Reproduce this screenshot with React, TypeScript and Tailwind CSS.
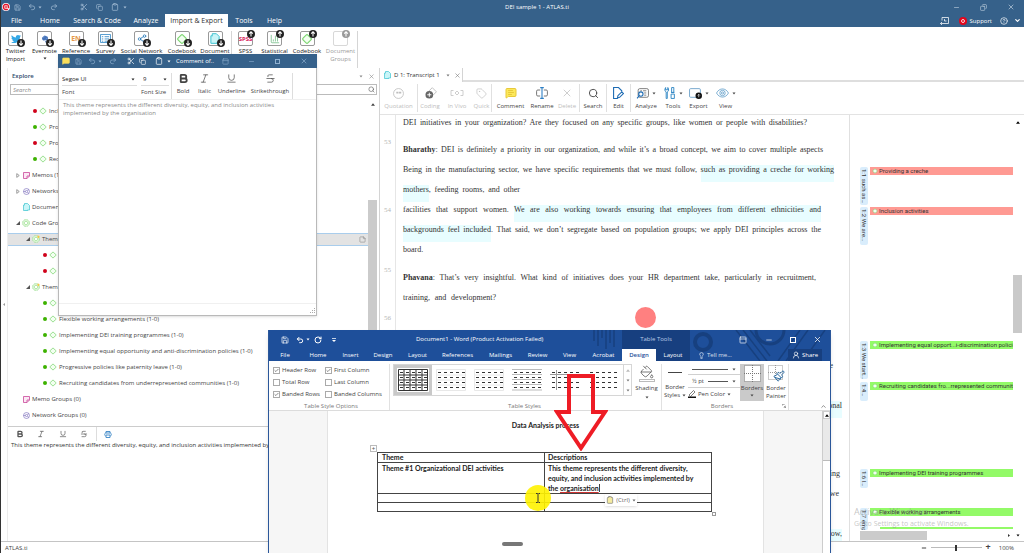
import type { ReactNode } from 'react'
import {
  BarChart3,
  Bold,
  Check,
  ChevronDown,
  ChevronUp,
  CircleHelp,
  Clipboard,
  Copy,
  Italic,
  Lightbulb,
  MessageSquareText,
  Minus,
  PaintBucket,
  Paintbrush,
  PanelTop,
  Redo2,
  RotateCw,
  Save,
  Scissors,
  Search,
  Share2,
  StickyNote,
  Strikethrough,
  Tag,
  Underline,
  Undo2,
  UserRound,
  X,
} from 'lucide-react'
import { FaTwitter, FaEvernote } from 'react-icons/fa'

const Caret = ({ className = '' }: { className?: string }) => (
  <svg viewBox="0 0 8 6" className={`h-[3px] w-1 shrink-0 fill-current ${className}`}>
    <path d="M1 1h6L4 5z" />
  </svg>
)

const CaretUp = ({ className = '' }: { className?: string }) => (
  <svg viewBox="0 0 6 4" className={`h-[3px] w-1 shrink-0 fill-current ${className}`}>
    <path d="M0 4h6L3 0z" />
  </svg>
)

const Diamond = ({ className = '' }: { className?: string }) => (
  <svg viewBox="0 0 14 14" className={`shrink-0 ${className}`}>
    <rect x="3" y="3" width="8" height="8" rx="1.5" transform="rotate(45 7 7)" fill="#f2fff0" stroke="#7ed672" strokeWidth="1.4" />
  </svg>
)

const CodeGroupIcon = ({ star = false }: { star?: boolean }) => (
  <svg viewBox="0 0 16 16" className="size-2 shrink-0">
    <circle cx="8" cy="8" r="7" fill="#dff7da" stroke="#8fd884" strokeDasharray="4 1.5" strokeWidth="1.2" />
    <rect x="5" y="5" width="6" height="6" rx="1" transform="rotate(45 8 8)" fill="#fff" stroke="#7ed672" strokeWidth="1.2" />
    {star && <path d="M12 0l1.500 2.500 2.500.5-2 1.500-1 2.500-1.500-2-2.500-1 2.500-1z" fill="#f7c63c" />}
  </svg>
)

const MemoIcon = () => (
  <svg viewBox="0 0 14 14" className="size-[7px] shrink-0" fill="#fbe8f4" stroke="#c9479b" strokeWidth="1.6">
    <path d="M1 1h12v7l-5 5H1zM13 8H8v5" />
  </svg>
)

const NetworkIcon = () => (
  <svg viewBox="0 0 14 14" className="size-[7px] shrink-0" fill="none" stroke="#7d6fbd" strokeWidth="1.3">
    <circle cx="7" cy="7" r="6" />
    <circle cx="7" cy="7" r="2.2" />
    <path d="M1 7h4M9 5l3-2M9 9l3 2" />
  </svg>
)

const DocIcon = ({ className = 'h-2 w-[7px]' }: { className?: string }) => (
  <svg viewBox="0 0 14 16" className={`shrink-0 ${className}`} fill="#c9f5f8" stroke="#3cc3d0" strokeWidth="1.4">
    <path d="M3 1h6l4 4v9H3z" />
    <path d="M3 4H1v11h9" />
  </svg>
)

/* ---------- main ribbon ---------- */

const ribbonTabs = [
  { label: 'File', width: 'w-[33px]' },
  { label: 'Home', width: 'w-[34px]' },
  { label: 'Search & Code', width: 'w-[60px]' },
  { label: 'Analyze', width: 'w-[38px]' },
  { label: 'Import & Export', width: 'w-[63px]', active: true },
  { label: 'Tools', width: 'w-8' },
  { label: 'Help', width: 'w-[29px]' },
]

type RibbonItem = { lines: string[]; width: string; up?: boolean; off?: boolean; sep?: boolean; menu?: boolean; icon: ReactNode }

const SurveyGlyph = () => (
  <svg viewBox="0 0 12 10" className="h-[9px] w-[11px]" fill="none" stroke="#3d8fc9" strokeWidth="1">
    <path d="M.5.5h11v9H.5zM2 3h1.500M5 3h5M2 5.500h1.500M5 5.500h5M2 8h1.500M5 8h3" />
  </svg>
)

const ribbonItems: RibbonItem[] = [
  { lines: ['Twitter', 'Import'], width: 'w-[29px]', icon: <FaTwitter className="size-2.5 text-[#35a8e6]" /> },
  { lines: ['Evernote'], width: 'w-[29px]', menu: true, icon: <FaEvernote className="size-2 text-[#4674ba]" /> },
  { lines: ['Reference'], width: 'w-[34px]', icon: <span className="text-[7px] font-bold text-[#e59a4a]">EN</span> },
  { lines: ['Survey'], width: 'w-[25px]', icon: <SurveyGlyph /> },
  { lines: ['Social Network'], width: 'w-[47px]', icon: <Share2 className="size-2.5 text-[#2f7dbb]" /> },
  { lines: ['Codebook'], width: 'w-[34px]', icon: <Diamond className="size-3" /> },
  { lines: ['Document'], width: 'w-[33px]', sep: true, icon: <DocIcon className="h-[11px] w-2.5" /> },
  { lines: ['SPSS'], width: 'w-[27px]', up: true, icon: <span className="text-[6px] font-bold text-[#d6205a]">SPSS</span> },
  { lines: ['Statistical'], width: 'w-[31px]', up: true, icon: <BarChart3 className="size-2.5 text-[#78bf8b]" /> },
  { lines: ['Codebook'], width: 'w-[34px]', up: true, icon: <Diamond className="size-3" /> },
  { lines: ['Document', 'Groups'], width: 'w-[34px]', up: true, off: true, sep: true, icon: null },
]

const TransferBadge = ({ up }: { up?: boolean }) => (
  <svg
    viewBox="0 0 10 10"
    className={up ? 'absolute -top-0.5 -right-[3px] size-2' : 'absolute -right-[3px] -bottom-0.5 size-2'}
  >
    <circle cx="5" cy="5" r="5" fill="currentColor" />
    <path d={up ? 'M5 8V2.500M2.700 4.500L5 2.200l2.300 2.300' : 'M5 2v5.500M2.700 5.500L5 7.800l2.300-2.300'} fill="none" stroke="#fff" strokeWidth="1.3" />
  </svg>
)

function QuickAccess() {
  return (
    <div className="flex items-center text-[#a9c1d9]">
      <svg viewBox="0 0 18 18" className="ml-0.5 size-2">
        <circle cx="9" cy="9" r="9" fill="#fff" />
        <path d="M9 3a6 6 0 1 0 4 10.500M9 3a6 6 0 0 1 6 6v3" fill="none" stroke="#e2132a" strokeWidth="3" />
        <circle cx="9" cy="9" r="2.500" fill="none" stroke="#e2132a" strokeWidth="2" />
      </svg>
      <Save className="ml-1 size-[7px]" />
      <Undo2 className="ml-[7px] size-2" />
      <Caret className="ml-0.5" />
      <Redo2 className="ml-2 size-2" />
      <Scissors className="ml-[22px] size-2" />
      <Copy className="ml-2 size-[7px]" />
      <Clipboard className="ml-2 size-2" />
      <Caret className="ml-1" />
    </div>
  )
}

function AppHeader() {
  return (
    <header className="shrink-0 bg-[#36618a] text-white">
      <div className="grid h-[14px] grid-cols-[1fr_auto_1fr] items-center">
        <QuickAccess />
        <h1 className="pl-[50px] text-[6px] leading-[8px]">DEI sample 1 - ATLAS.ti</h1>
        <div className="flex items-center justify-end gap-5 pr-[9px] text-[#c6d5e3]">
          <button aria-label="Minimize"><Minus className="size-[7px]" /></button>
          <button aria-label="Restore"><Copy className="size-[7px] -scale-x-100" /></button>
          <button aria-label="Close"><X className="size-2" /></button>
        </div>
      </div>
      <div className="flex h-[13px] items-stretch">
        <nav className="flex text-[7px] leading-[13px]">
          {ribbonTabs.map((t) => (
            <button
              key={t.label}
              className={`${t.width} whitespace-nowrap text-center ${t.active ? 'bg-white text-[#333]' : ''}`}
            >
              {t.label}
            </button>
          ))}
        </nav>
        <div className="ml-auto flex items-center pr-[3px] text-[6px] leading-[8px]">
          <svg viewBox="0 0 18 16" className="h-2 w-[9px]" fill="none" stroke="#fff" strokeWidth="1.500">
            <path d="M4 1h13v12H1M9 4v4h4M4 10l-3 3 3 3M4 1v6" />
          </svg>
          <button className="ml-[10px] flex items-center gap-0.5">
            <span className="flex size-2 items-center justify-center rounded-full bg-[#e2061c]">
              <span className="size-1 rounded-full border border-white/80" />
            </span>
            Support
          </button>
          <button aria-label="Help" className="ml-2"><CircleHelp className="size-2" /></button>
          <button aria-label="Collapse ribbon" className="ml-1.5"><ChevronDown strokeWidth={4} className="size-[7px]" /></button>
        </div>
      </div>
    </header>
  )
}

function Ribbon() {
  return (
    <div className="flex h-[41px] shrink-0 pt-1 pl-px">
      {ribbonItems.map((item, i) => (
        <button
          key={i}
          className={`flex flex-col items-center pb-0.5 text-[6px] leading-[8px] ${item.width} ${item.off ? 'text-[#9a9a9a]' : 'text-[#222]'} ${item.sep ? 'border-r border-[#d5d5d5]' : ''}`}
        >
          <span className={`relative mb-px flex size-[15px] shrink-0 items-center justify-center rounded-xs border ${item.off ? 'border-[#d8d8d8]' : 'border-[#999]'}`}>
            {item.icon}
            <TransferBadge up={item.up} />
          </span>
          {item.lines.map((l) => (
            <span key={l} className="whitespace-nowrap">{l}</span>
          ))}
          {item.menu && <Caret className="mt-0.5" />}
        </button>
      ))}
    </div>
  )
}

/* ---------- explorer ---------- */

type TreeRow = { kind: 'code' | 'memo' | 'network' | 'doc' | 'group' | 'theme'; text: string; level: 0 | 1 | 2; dot?: 'red' | 'green'; open?: boolean; closed?: boolean; selected?: boolean }

const tree: TreeRow[] = [
  { kind: 'code', text: 'Incl', level: 1, dot: 'red' },
  { kind: 'code', text: 'Progressive', level: 1, dot: 'green' },
  { kind: 'code', text: 'Providing', level: 1, dot: 'red' },
  { kind: 'code', text: 'Recruiting', level: 1, dot: 'green' },
  { kind: 'memo', text: 'Memos (1)', level: 0, closed: true },
  { kind: 'network', text: 'Networks (0)', level: 0, closed: true },
  { kind: 'doc', text: 'Document Groups (0)', level: 0 },
  { kind: 'group', text: 'Code Groups (2)', level: 0, open: true },
  { kind: 'theme', text: 'Theme #1', level: 1, open: true, selected: true },
  { kind: 'code', text: 'Inclusion activities (1-0)', level: 2, dot: 'red' },
  { kind: 'code', text: 'Providing a creche (1-0)', level: 2, dot: 'red' },
  { kind: 'theme', text: 'Theme #2', level: 1, open: true },
  { kind: 'code', text: 'Employee support (1-0)', level: 2, dot: 'green' },
  { kind: 'code', text: 'Flexible working arrangements (1-0)', level: 2, dot: 'green' },
  { kind: 'code', text: 'Implementing DEI training programmes (1-0)', level: 2, dot: 'green' },
  { kind: 'code', text: 'Implementing equal opportunity and anti-discrimination policies (1-0)', level: 2, dot: 'green' },
  { kind: 'code', text: 'Progressive policies like paternity leave (1-0)', level: 2, dot: 'green' },
  { kind: 'code', text: 'Recruiting candidates from underrepresented communities (1-0)', level: 2, dot: 'green' },
  { kind: 'memo', text: 'Memo Groups (0)', level: 0 },
  { kind: 'network', text: 'Network Groups (0)', level: 0 },
]

const indent = ['pl-[6px]', 'pl-4', 'pl-[33px]']

function TreeItem({ row }: { row: TreeRow }) {
  const pad = row.kind === 'code' && row.level === 1 ? 'pl-[23px]' : indent[row.level]
  return (
    <li className="flex h-4 items-center">
      <div
        className={`flex h-[13px] w-full items-center border-y ${pad} ${row.selected ? 'border-[#a9cdec] bg-[#e3e3e3]' : 'border-transparent'}`}
      >
        <span className="flex w-2 shrink-0 justify-center">
          {row.dot && <span className={`size-1 rounded-full ${row.dot === 'red' ? 'bg-[#d0021b]' : 'bg-[#3db200]'}`} />}
          {row.closed && <svg viewBox="0 0 6 8" className="h-[5px] w-1"><path d="M1 1l4 3-4 3z" fill="none" stroke="#666" /></svg>}
          {row.open && <svg viewBox="0 0 6 6" className="size-1"><path d="M6 0v6H0z" fill="#555" /></svg>}
        </span>
        <span className="mr-0.5 flex w-2 shrink-0 justify-center">
          {row.kind === 'code' && <Diamond className="size-2" />}
          {row.kind === 'memo' && <MemoIcon />}
          {row.kind === 'network' && <NetworkIcon />}
          {row.kind === 'doc' && <DocIcon />}
          {row.kind === 'group' && <CodeGroupIcon />}
          {row.kind === 'theme' && <CodeGroupIcon star />}
        </span>
        <span className="whitespace-nowrap">{row.text}</span>
        {row.selected && <StickyNote className="mr-0.5 ml-auto size-[7px] text-[#888]" />}
      </div>
    </li>
  )
}

function Explorer() {
  return (
    <aside className="flex w-[380px] shrink-0 border-r border-[#d4d4d4]">
      <div className="flex w-2 items-center justify-center border-r border-[#ececec]">
        <Caret className="rotate-90 text-[#999]" />
      </div>
      <div className="flex min-w-0 flex-1 flex-col text-[6px] leading-[8px] text-[#444]">
        <div className="flex h-4 items-center px-1">
          <h2 className="font-semibold text-[#2c4a6b]">Explore</h2>
          <Caret className="mr-[5px] ml-auto text-[#888]" />
          <X className="size-[7px] text-[#888]" />
        </div>
        <label className="mx-0.5 flex h-[11px] items-center border border-[#bbb] pr-px pl-0.5">
          <input aria-label="Search" placeholder="Search" className="min-w-0 flex-1 italic outline-none placeholder:text-[#888]" />
          <Search className="size-[7px] text-[#555]" />
        </label>
        <div className="mt-2 flex h-[323px]">
          <ul className="min-w-0 flex-1">
            {tree.map((row, i) => (
              <TreeItem key={i} row={row} />
            ))}
          </ul>
          <div className="flex w-[9px] flex-col items-center">
            <CaretUp />
            <div className="mt-[94px] w-full flex-1 bg-[#cbcbcb]" />
          </div>
          <div className="w-0.5" />
        </div>
        <div className="flex h-[15px] shrink-0 items-center border-t border-[#ccc] pl-2 text-[#555]">
          <button aria-label="Bold"><Bold strokeWidth={4} className="size-2" /></button>
          <button aria-label="Italic" className="ml-[13px]"><Italic className="size-2" /></button>
          <button aria-label="Underline" className="ml-[14px]"><Underline className="size-2" /></button>
          <button aria-label="Strikethrough" className="ml-[13px]"><Strikethrough className="size-2" /></button>
          <span className="ml-2 h-full border-l border-[#ddd]" />
          <svg viewBox="0 0 16 14" className="ml-[7px] h-[7px] w-2" fill="none" stroke="#3a86c6" strokeWidth="1.8">
            <path d="M4 4V1h8v3M3 10c-2 0-2-6 0-6h10c2 0 2 6 0 6M4 8h8v5H4z" />
          </svg>
        </div>
        <p className="flex-1 pl-[3px] whitespace-nowrap text-[#333]">
          This theme represents the different diversity, equity, and inclusion activities implemented by
        </p>
      </div>
    </aside>
  )
}

/* ---------- document ---------- */

type Tool = { label: string; width: string; off?: boolean; sep?: boolean; menu?: boolean; icon: ReactNode }

const tools: Tool[] = [
  {
    label: 'Quotation', width: 'w-[38px]', off: true, sep: true,
    icon: <svg viewBox="0 0 20 20" className="size-[11px]" fill="none" stroke="currentColor" strokeWidth="1.5"><circle cx="10" cy="10" r="9" /><path d="M7 7v3M9 7v3M12 7v3M14 7v3" strokeWidth="2" /></svg>,
  },
  {
    label: 'Coding', width: 'w-6', off: true,
    icon: <svg viewBox="0 0 22 20" className="h-3 w-[13px]"><path d="M8 7l6-6 7 7-6 6" fill="none" stroke="#bbb" strokeWidth="1.5" /><circle cx="9" cy="13" r="6.500" fill="#666" /><path d="M9 9.500v7M5.500 13h7" stroke="#fff" strokeWidth="1.6" /></svg>,
  },
  {
    label: 'In Vivo', width: 'w-[30px]', off: true,
    icon: <svg viewBox="0 0 26 12" className="h-1.5 w-[14px]" fill="none" stroke="currentColor" strokeWidth="1.5"><path d="M6 1H1v10h5M20 1h5v10h-5M13 2l4 4-4 4-4-4z" /></svg>,
  },
  { label: 'Quick', width: 'w-[20px]', off: true, sep: true, icon: <Tag strokeWidth={1.5} className="size-[11px]" /> },
  { label: 'Comment', width: 'w-[37px]', icon: <MessageSquareText className="size-3 fill-[#fce85a] text-[#e8c93a]" /> },
  {
    label: 'Rename', width: 'w-[26px]',
    icon: <svg viewBox="0 0 20 20" className="size-3" fill="none" strokeWidth="1.5"><path d="M7 5H3a2 2 0 0 0-2 2v6a2 2 0 0 0 2 2h4M13 5h4a2 2 0 0 1 2 2v6a2 2 0 0 1-2 2h-4" stroke="#666" /><path d="M10 1v18M7 1h6M7 19h6" stroke="#2d7fc4" strokeWidth="1.800" /></svg>,
  },
  { label: 'Delete', width: 'w-[25px]', off: true, sep: true, icon: <X strokeWidth={1.5} className="size-3" /> },
  { label: 'Search', width: 'w-[27px]', sep: true, icon: <Search className="size-[11px]" /> },
  {
    label: 'Edit', width: 'w-6', sep: true,
    icon: <svg viewBox="0 0 20 22" className="h-3 w-[11px]" fill="none" stroke="#1d6bb3" strokeWidth="2"><path d="M9 21H1V1h9l6 6v3M9 16l7-7 3 3-7 7-4 1z" /></svg>,
  },
  {
    label: 'Analyze', width: 'w-[30px]', menu: true,
    icon: <svg viewBox="0 0 24 20" className="h-[11px] w-[13px]" fill="none" stroke="#666" strokeWidth="1.500"><rect x="4" y="1" width="19" height="16" rx="3" /><path d="M8 5h3M13 5h6M15 9h4M15 13h4" /><circle cx="9" cy="11" r="4" stroke="#1d6bb3" strokeWidth="2" /><path d="M6 14l-4 5" stroke="#1d6bb3" strokeWidth="2" /></svg>,
  },
  {
    label: 'Tools', width: 'w-6', menu: true,
    icon: <svg viewBox="0 0 22 22" className="size-3" fill="none" stroke="#2d86c4" strokeWidth="1.700"><path d="M4 21V9C1 8 1 4 3 1v4h4V1c2 3 2 7-1 8v12zM14 1h4v9h-4zM13 13h6v8h-6zM13 10h6" /></svg>,
  },
  {
    label: 'Export', width: 'w-[27px]', menu: true,
    icon: <svg viewBox="0 0 24 20" className="h-[11px] w-[13px]"><rect x="1" y="1" width="20" height="16" rx="2" fill="none" stroke="#5e98c4" strokeWidth="1.500" /><circle cx="18" cy="14" r="6" fill="#111" /><path d="M18 17v-5M16 13.500l2-2 2 2" fill="none" stroke="#fff" strokeWidth="1.300" /></svg>,
  },
  {
    label: 'View', width: 'w-[27px]', menu: true,
    icon: <svg viewBox="0 0 24 18" className="h-[10px] w-[13px]" fill="none" stroke="#4a90c2" strokeWidth="1.300"><path d="M1 9C6-1 18-1 23 9 18 19 6 19 1 9z" /><circle cx="12" cy="9" r="5" /><circle cx="12" cy="9" r="2" /></svg>,
  },
]

function DocToolbar() {
  return (
    <div className="flex h-[33px] shrink-0 border-b border-[#e3e3e3] py-0.5 text-[6px] leading-[8px] text-[#444]">
      {tools.map((t) => (
        <button
          key={t.label}
          className={`flex shrink-0 flex-col items-center ${t.width} ${t.off ? 'text-[#bdbdbd]' : ''} ${t.sep ? 'border-r border-[#e0e0e0]' : ''}`}
        >
          <span className="flex h-[18px] items-center gap-[3px]">
            {t.icon}
            {t.menu && <Caret />}
          </span>
          <span className="whitespace-nowrap">{t.label}</span>
        </button>
      ))}
    </div>
  )
}

const Line = ({ width = 'w-[420px]', justify = true, children }: { width?: string; justify?: boolean; children: ReactNode }) => (
  <span className={`block h-5 whitespace-nowrap ${width} ${justify ? '[text-align-last:justify]' : ''}`}>{children}</span>
)

const Quote = ({ children }: { children: ReactNode }) => <mark className="bg-[#e8fdff] pb-2 text-inherit">{children}</mark>

function Paragraph({ no, low = false, children }: { no?: string; low?: boolean; children: ReactNode }) {
  return (
    <div className="flex">
      <span className={`w-4 shrink-0 border-r border-[#e6e6e6] text-center font-['Liberation_Serif',serif] text-[7px] text-[#b5b5b5] ${low ? 'leading-5' : 'pt-2 leading-[5px]'}`}>
        {no}
      </span>
      <p className={`pl-[7px] ${low ? '' : 'pt-2'}`}>{children}</p>
    </div>
  )
}

function Transcript() {
  return (
    <article className="min-w-0 flex-1 overflow-hidden font-['Liberation_Serif',serif] text-[8px] leading-5 text-[#333]">
      <div className="flex h-[17px] leading-4">
        <span className="w-4 shrink-0 border-r border-[#e6e6e6]" />
        <p className="w-[411px] pl-[7px] whitespace-nowrap [text-align-last:justify]">
          DEI initiatives in your organization? Are they focused on any specific groups, like women or people with disabilities?
        </p>
      </div>
      <Paragraph no="53">
        <Line><b>Bharathy</b>: DEI is definitely a priority in our organization, and while it&rsquo;s a broad concept, we aim to cover multiple aspects</Line>
        <Line width="w-[431px]">Being in the manufacturing sector, we have specific requirements that we must follow, <Quote>such as providing a creche for working</Quote></Line>
        <Line width="w-[117px]"><Quote>mothers</Quote>, feeding rooms, and other</Line>
      </Paragraph>
      <Paragraph no="54" low>
        <Line width="w-[418px]">facilities that support women. <Quote>We are also working towards ensuring that employees from different ethnicities and</Quote></Line>
        <Line width="w-[418px]"><Quote>backgrounds feel included</Quote>. That said, we don&rsquo;t segregate based on population groups; we apply DEI principles across the</Line>
        <Line justify={false}>board.</Line>
      </Paragraph>
      <Paragraph no="55">
        <Line width="w-[413px]"><b>Phavana</b>: That&rsquo;s very insightful. What kind of initiatives does your HR department take, particularly in recruitment,</Line>
        <Line width="w-[93px]">training, and development?</Line>
      </Paragraph>
      <Paragraph no="56">
        <span className="block w-[439px] text-right">
          <span className="block h-10" />
          <span className="block h-5 pr-[9px]">the</span>
          <span className="block h-5" />
          <span className="block h-5"><Quote>national</Quote></span>
        </span>
      </Paragraph>
      <Paragraph no="57">
        <span className="block w-[439px] text-right">
          <span className="block h-10" />
          <span className="block h-5 pr-0.5">ing</span>
          <span className="block h-5 pr-[3px]">we</span>
          <span className="block h-5" />
          <span className="block h-5"><Quote>now,</Quote></span>
        </span>
      </Paragraph>
    </article>
  )
}

const quotations = [
  { id: '1:1 such as…', place: 'mt-[52px] h-[38px]', code: 'Providing a creche', color: 'bg-[#ff9a93]' },
  { id: '1:2 We are…', place: 'mt-[2px] h-[38px]', code: 'Inclusion activities', color: 'bg-[#ff9a93]' },
  { id: '1:3 We start…', place: 'mt-[96px] h-[38px]', code: 'Implementing equal opport...i-discrimination policie', color: 'bg-[#93fa68]' },
  { id: '1:4…', place: 'mt-[3px] h-[19px]', code: 'Recruiting candidates fro...rrepresented communitie', color: 'bg-[#93fa68]' },
  { id: '1:6 I…', place: 'mt-[68px] h-[19px]', code: 'Implementing DEI training programmes', color: 'bg-[#93fa68]' },
  { id: '1:7 emp', place: 'mt-[20px] h-[22px]', code: 'Flexible working arrangements', color: 'bg-[#93fa68]' },
]

function MarginArea() {
  return (
    <div className="relative flex w-[164px] shrink-0 flex-col border-l border-[#e0e0e0] pl-[10px] font-['Roboto',sans-serif] text-[6px] leading-[8px] text-[#333]">
      {quotations.map((q) => (
        <div key={q.id} className={`flex shrink-0 gap-0.5 ${q.place}`}>
          <span className="w-2 overflow-hidden rounded-xs bg-[#d9edfc] pt-0.5 whitespace-nowrap [writing-mode:vertical-rl]">{q.id}</span>
          <span className={`flex h-2 min-w-0 flex-1 items-center gap-px overflow-hidden pl-0.5 whitespace-nowrap ${q.color}`}>
            <Diamond className="size-1.5" />
            {q.code}
          </span>
        </div>
      ))}
      <div className="mt-auto flex h-[11px] shrink-0 items-center">
        <div className="h-[9px] w-[67px] bg-[#cbcbcb]" />
        <Caret className="mr-0.5 ml-auto -rotate-90" />
      </div>
      <div className="absolute bottom-[12px] left-[30px] h-0.5 w-[133px] bg-[#93fa68]" />
      <div className="absolute bottom-3 left-1 font-['Open_Sans',sans-serif] whitespace-nowrap text-[#8a8a8a]/50">
        <p className="text-[9px] leading-[12px]">Activate Windows</p>
        <p className="text-[7px] leading-[11px]">Go to Settings to activate Windows.</p>
      </div>
    </div>
  )
}

function DocumentPane() {
  return (
    <main className="flex min-w-0 flex-1 flex-col">
      <div className="flex h-[14px] shrink-0">
        <button className="flex w-[83px] shrink-0 items-center border-r border-[#d4d4d4] pl-1 text-[6px] leading-[8px] text-[#333]">
          <DocIcon />
          <span className="ml-[3px] whitespace-nowrap">D 1: Transcript 1</span>
          <Caret className="ml-1.5 text-[#777]" />
          <X className="ml-1 size-[7px] text-[#777]" />
        </button>
        <div className="flex-1 border-b-2 border-[#dedede]" />
      </div>
      <DocToolbar />
      <div className="flex min-h-0 flex-1">
        <Transcript />
        <MarginArea />
        <div className="flex w-[11px] flex-col items-center pt-1.5 pr-0.5 pb-1">
          <CaretUp />
          <div className="mt-[151px] h-[58px] w-full bg-[#c9c9c9]" />
          <Caret className="mt-auto" />
        </div>
      </div>
    </main>
  )
}

function StatusBar() {
  return (
    <footer className="flex h-3 shrink-0 items-center border-t border-[#c4c4c4] pr-[10px] pl-[5px] text-[6px] leading-[8px] text-[#444]">
      <span>ATLAS.ti</span>
      <button aria-label="Zoom out" className="ml-auto"><Minus strokeWidth={4} className="size-1.5" /></button>
      <div className="relative mx-1 flex h-2 w-[51px] items-center">
        <span className="h-px w-full bg-[#bbb]" />
        <span className="absolute left-6 h-1.5 w-0.5 bg-[#333]" />
      </div>
      <button aria-label="Zoom in"><span className="text-[9px] font-bold">+</span></button>
      <span className="ml-2">100%</span>
    </footer>
  )
}

/* ---------- comment editor ---------- */

const formats = [
  { label: 'Bold', width: 'w-[22px]', icon: <Bold strokeWidth={4} className="size-[11px]" /> },
  { label: 'Italic', width: 'w-[21px]', icon: <Italic strokeWidth={1.5} className="size-[11px]" /> },
  { label: 'Underline', width: 'w-[33px]', icon: <Underline strokeWidth={1.5} className="size-[11px]" /> },
  { label: 'Strikethrough', width: 'w-[44px]', icon: <Strikethrough strokeWidth={1.5} className="size-[11px]" /> },
]

function CommentWindow() {
  return (
    <section className="absolute top-[54px] left-[58px] flex h-[262px] w-[259px] flex-col border border-[#b9b9b9] bg-white text-[6px] leading-[8px] text-[#444] shadow-sm">
      <div className="-mx-px -mt-px flex h-[14px] shrink-0 items-center bg-[#36618a] pl-1 text-[#8fb0d0]">
        <MessageSquareText className="size-2 fill-[#fbdf5c] text-[#fbdf5c]" />
        <Save className="ml-[5px] size-[7px]" />
        <Undo2 className="ml-1.5 size-2" />
        <Caret className="ml-0.5" />
        <Redo2 className="ml-[7px] size-2" />
        <Scissors className="ml-2.5 size-2 text-white" />
        <Copy className="ml-1 size-[7px] text-white" />
        <Clipboard className="ml-[9px] size-2 text-white" />
        <Caret className="ml-1 text-white" />
        <h2 className="ml-[5px] whitespace-nowrap text-white">Comment of..</h2>
        <PanelTop className="ml-auto size-[7px]" />
        <button aria-label="Minimize" className="ml-[19px]"><Minus className="size-[7px]" /></button>
        <button aria-label="Maximize" className="ml-5 size-[5px] border border-current" />
        <button aria-label="Close" className="mr-[9px] ml-5"><X className="size-2" /></button>
      </div>
      <div className="flex h-8 shrink-0 border-b border-[#efefef] pt-[5px] pl-[3px]">
        <label className="flex w-[75px] flex-col">
          <span className="flex h-[13px] items-center border-b border-[#ddd] pr-0.5 text-[#222]">
            <select defaultValue="Segoe UI" className="w-full appearance-none outline-none">
              <option>Segoe UI</option>
            </select>
            <Caret />
          </span>
          <span className="pt-0.5">Font</span>
        </label>
        <label className="ml-1 flex w-7 flex-col">
          <span className="flex h-[13px] items-center border-b border-[#ddd] pr-0.5 text-[#222]">
            <select defaultValue="9" className="w-full appearance-none pl-0.5 outline-none">
              <option>9</option>
            </select>
            <Caret />
          </span>
          <span className="pt-0.5 whitespace-nowrap">Font Size</span>
        </label>
        <div className="ml-0.5 flex h-[26px] border-x border-[#ddd]">
          {formats.map((f) => (
            <button key={f.label} className={`flex flex-col items-center gap-[3px] ${f.width}`}>
              {f.icon}
              <span>{f.label}</span>
            </button>
          ))}
        </div>
      </div>
      <p className="w-[220px] flex-1 pt-px pl-1 text-[#8a8a8a]">
        This theme represents the different diversity, equity, and inclusion activities implemented by the organisation
      </p>
      <div className="flex h-3 shrink-0 items-end justify-end border-t border-[#f0f0f0] p-px">
        <svg viewBox="0 0 6 6" className="size-1.5 fill-[#aaa]">
          <path d="M5 0h1v1H5zM5 2h1v1H5zM5 4h1v1H5zM3 2h1v1H3zM3 4h1v1H3zM1 4h1v1H1z" />
        </svg>
      </div>
    </section>
  )
}

/* ---------- word ---------- */

const wordTabs = [
  { label: 'File', width: 'w-8' },
  { label: 'Home', width: 'w-[34px]' },
  { label: 'Insert', width: 'w-[31px]' },
  { label: 'Design', width: 'w-[34px]' },
  { label: 'Layout', width: 'w-[35px]' },
  { label: 'References', width: 'w-[45px]' },
  { label: 'Mailings', width: 'w-[41px]' },
  { label: 'Review', width: 'w-[33px]' },
  { label: 'View', width: 'w-[31px]' },
  { label: 'Acrobat', width: 'w-[37px]' },
  { label: 'Design', width: 'w-[34px]', active: true },
  { label: 'Layout', width: 'w-[34px]' },
]

const styleOptions = [
  { label: 'Header Row', on: true },
  { label: 'First Column', on: true },
  { label: 'Total Row', on: false },
  { label: 'Last Column', on: false },
  { label: 'Banded Rows', on: true },
  { label: 'Banded Columns', on: false },
]

const rowYs = [3.5, 8.5, 13.5, 18.5]
const colXs = [2, 8, 14, 20, 26]

function StyleThumb({ variant }: { variant: number }) {
  return (
    <svg viewBox="0 0 30 22" className="h-[22px] w-[30px]">
      {variant === 0 && <path d="M.5.500h29v21H.5zM.5 6h29M.5 11h29M.5 16h29M6 .500v21M12 .500v21M18 .500v21M24 .500v21" fill="none" stroke="#333" />}
      {(variant === 1 || variant === 2) && <path d="M.5.500h29v21H.5zM.5 6h29M.5 11h29M.5 16h29" fill="none" stroke="#e8e8e8" />}
      {variant === 3 && <path d="M0 .500h30M0 5.500h30M0 10.500h30M0 15.500h30M0 21h30" stroke="#bbb" />}
      {variant === 4 && <path d="M6.500 1v20M0 5.500h30" stroke="#999" />}
      {rowYs.map((y) => colXs.map((x) => <path key={`${x}-${y}`} d={`M${x} ${y}h3`} stroke="#333" />))}
    </svg>
  )
}

function WordTitle() {
  return (
    <div className="relative shrink-0 overflow-hidden bg-[#1e4f9a] text-white">
      <svg viewBox="0 0 240 31" className="absolute top-0 right-0 h-[31px] w-[240px]" fill="none" stroke="#17407f">
        <path d="M4 0v11M8 0v16M12 0v8M16 0v19M20 0v13M24 0v17" strokeWidth="1.500" />
        <circle cx="113" cy="12" r="8" strokeWidth="4" />
        <path d="M146 0l24 31M153 0l24 31M160 0l20 26M210 0l-22 31M218 0l-22 31M235 0l-22 31" strokeWidth="1.500" />
        <path d="M166 0a14 14 0 0 0 28 0" strokeWidth="3" />
      </svg>
      <div className="relative flex h-[19px] items-center pl-3 text-[7px]">
        <Save className="size-2" />
        <Undo2 strokeWidth={3} className="ml-[7px] size-2" />
        <Caret className="ml-0.5" />
        <RotateCw strokeWidth={3} className="ml-1 size-2" />
        <svg viewBox="0 0 6 6" className="ml-[10px] size-1 fill-white"><path d="M0 0h6v1H0zM0 3h6L3 6z" /></svg>
        <h2 className="ml-20 text-[6px] whitespace-nowrap">Document1 - Word (Product Activation Failed)</h2>
        <div className="ml-auto flex h-full w-[68px] items-center justify-center bg-[#173f7f] text-[6px] text-[#b9cbe6]">Table Tools</div>
        <div className="flex w-[140px] shrink-0 items-center pr-2">
          <PanelTop className="ml-auto size-2" />
          <button aria-label="Minimize" className="ml-[18px]"><Minus className="size-2" /></button>
          <button aria-label="Maximize" className="ml-[17px] size-1.5 border border-current" />
          <button aria-label="Close" className="ml-[17px]"><X className="size-[9px]" /></button>
        </div>
      </div>
      <div className="relative flex h-3 text-[6px] leading-3">
        {wordTabs.map((t, i) => (
          <button key={i} className={`${t.width} shrink-0 ${t.active ? 'bg-white font-semibold text-[#1e4f9a]' : ''} ${i === 11 ? 'bg-[#173f7f]' : ''}`}>
            {t.label}
          </button>
        ))}
        <label className="ml-2 flex items-center gap-0.5">
          <Lightbulb className="size-[7px]" />
          <input aria-label="Tell me" placeholder="Tell me..." className="w-[50px] outline-none placeholder:text-white/80" />
        </label>
        <button className="mr-2 ml-auto flex w-[34px] items-center justify-center gap-0.5 bg-[#173f7f]">
          <UserRound className="size-2" />
          Share
        </button>
      </div>
    </div>
  )
}

function WordRibbon() {
  return (
    <div className="flex h-[50px] shrink-0 border-b border-[#dcdcdc] bg-white pt-[3px] text-[6px] leading-[8px] text-[#444]">
      <fieldset className="flex w-[121px] shrink-0 flex-col border-r border-[#e1e1e1] pl-1">
        <div className="grid grid-cols-[52px_1fr]">
          {styleOptions.map((o) => (
            <label key={o.label} className="flex h-3 items-center gap-0.5 whitespace-nowrap">
              <span className="relative flex size-[7px] shrink-0">
                <input type="checkbox" defaultChecked={o.on} className="peer size-[7px] appearance-none border border-[#aaa] bg-white" />
                <Check className="pointer-events-none absolute inset-px hidden size-[5px] peer-checked:block" strokeWidth={3} />
              </span>
              {o.label}
            </label>
          ))}
        </div>
        <div className="mt-auto text-center text-[#777]">Table Style Options</div>
      </fieldset>

      <div className="flex min-w-0 flex-1 flex-col pl-[3px]">
        <div className="flex h-8 border border-[#d6d6d6]">
          <div className="flex flex-1 items-center">
            {[0, 1, 2, 3, 4, 5].map((v) => (
              <button key={v} aria-label={`Table style ${v + 1}`} className={`flex h-full w-[38px] items-center justify-center ${v === 0 ? 'border-3 border-[#c9c9c9]' : ''}`}>
                <StyleThumb variant={v} />
              </button>
            ))}
          </div>
          <div className="flex w-2 flex-col items-center justify-around border-l border-[#d6d6d6] text-[#777]">
            <CaretUp className="text-[#bbb]" />
            <Caret />
            <Caret />
          </div>
        </div>
        <div className="mt-auto pl-6 text-center text-[#777]">Table Styles</div>
      </div>

      <button className="flex w-[30px] shrink-0 flex-col items-center border-r border-[#e1e1e1]">
        <PaintBucket strokeWidth={1.2} className="mt-px size-[14px]" />
        <span className="h-[3px] w-4 border border-[#bbb]" />
        <span className="mt-0.5">Shading</span>
        <Caret className="mt-1" />
      </button>

      <div className="flex w-[127px] shrink-0 flex-col border-r border-[#e1e1e1]">
        <div className="flex">
          <button className="flex w-[26px] flex-col items-center">
            <span className="mt-2 mb-[10px] h-px w-[14px] bg-[#444]" />
            <span>Border</span>
            <span className="flex items-center gap-0.5">Styles <Caret /></span>
          </button>
          <div className="flex w-[52px] flex-col">
            <button aria-label="Line style" className="flex h-[11px] items-center justify-between border-b border-[#d0d0d0] px-1">
              <span className="h-px w-9 bg-[#555]" />
              <Caret />
            </button>
            <button className="flex h-[13px] items-center justify-between border-b border-[#d0d0d0] px-1">
              <span>½ pt</span>
              <span className="h-px w-5 bg-[#555]" />
              <Caret />
            </button>
            <button className="flex h-3 items-center gap-0.5 whitespace-nowrap">
              <svg viewBox="0 0 16 16" className="size-2"><path d="M2 10l9-9 3 3-9 9z" fill="none" stroke="#555" strokeWidth="1.500" /><path d="M0 13h16v3H0z" fill="#111" /></svg>
              Pen Color <Caret />
            </button>
          </div>
          <button className="flex h-[37px] w-6 flex-col items-center bg-[#cacaca]">
            <svg viewBox="0 0 17 17" className="mt-px mb-0.5 size-[17px] shrink-0" fill="#fff" stroke="#777" strokeDasharray="1 1">
              <path d="M.5.500h16v16H.5zM8.500 0v17M0 8.500h17" />
            </svg>
            Borders
            <Caret className="mt-0.5" />
          </button>
          <button className="flex flex-1 flex-col items-center">
            <span className="relative mt-px mb-0.5 size-[17px]">
              <svg viewBox="0 0 17 17" className="size-[17px]" fill="none" stroke="#999" strokeDasharray="1 1">
                <path d="M.5.500h14v14H.5zM7.500 0v14M0 7.500h14" />
              </svg>
              <Paintbrush className="absolute right-0 bottom-0 size-3 text-[#2c6aa0]" />
            </span>
            <span>Border</span>
            <span>Painter</span>
          </button>
        </div>
        <div className="mt-auto flex items-center">
          <span className="flex-1 text-center text-[#777]">Borders</span>
          <svg viewBox="0 0 6 6" className="mr-0.5 size-1" fill="none" stroke="#777"><path d="M0 3V.500h4M3 3l2.500 2.500M5.500 2.500v3h-3" /></svg>
        </div>
      </div>
      <button aria-label="Collapse ribbon" className="mt-auto ml-auto w-[41px] pl-[31px]"><ChevronUp className="size-[7px]" /></button>
    </div>
  )
}

function WordPage() {
  return (
    <div className="flex min-h-0 flex-1 bg-[#f6f6f6]">
      <div className="w-[59px] border-r border-[#e3e3e3]" />
      <div className="relative flex-1 bg-white font-['Lato',sans-serif] text-[7px] leading-[10px] font-bold text-[#222]">
        <h3 className="pt-[9px] text-center">Data Analysis process</h3>
        <div className="relative mt-[22px] mr-[51px] ml-[49px]">
          <span className="absolute -top-[7px] -left-[7px] flex size-[7px] items-center justify-center border border-[#bbb] text-[6px] leading-[6px] font-normal text-[#555]">+</span>
          <table className="w-full table-fixed border-collapse text-left">
            <thead>
              <tr className="leading-[9px]">
                <th className="border border-[#444] p-0 pl-1">Theme</th>
                <th className="border border-[#444] p-0 pl-[3px]">Descriptions</th>
              </tr>
            </thead>
            <tbody className="align-top">
              <tr>
                <td className="border border-[#444] p-0 pl-1">Theme #1 Organizational DEI activities</td>
                <td className="border border-[#444] p-0 pl-[3px] whitespace-nowrap">
                  <span className="block">This theme represents the different diversity,</span>
                  <span className="block">equity, and inclusion activities implemented by</span>
                  <span className="block">the <span className="border-r border-[#444] underline decoration-[#c33] decoration-1">organisation</span></span>
                </td>
              </tr>
              <tr className="h-[9px]"><td className="border border-[#444]" /><td className="border border-[#444]" /></tr>
              <tr className="h-[9px]"><td className="border border-[#444]" /><td className="border border-[#444]" /></tr>
            </tbody>
          </table>
          <span className="absolute -right-1 -bottom-1 size-1 border border-[#999] bg-white" />
          <button className="absolute right-[75px] bottom-1.5 flex h-3 w-8 items-center justify-center gap-0.5 bg-white font-['Open_Sans',sans-serif] text-[6px] font-normal text-[#666] shadow-sm">
            <Clipboard className="size-2 fill-[#f5eba0] text-[#777]" />
            (Ctrl)
            <Caret />
          </button>
        </div>
      </div>
      <div className="w-[59px] border-l border-[#e3e3e3]" />
      <div className="flex w-2 flex-col items-center border-l border-[#ccc] bg-white">
        <span className="flex h-2 w-full items-center justify-center border border-[#ccc]"><CaretUp /></span>
        <span className="h-[42px] w-full border-b border-[#bbb] bg-[#e9e9e9]" />
      </div>
    </div>
  )
}

function WordWindow() {
  return (
    <section className="absolute top-[330px] bottom-0 left-[268px] flex w-[563px] flex-col border-x border-[#2b579a] bg-white shadow-md">
      <WordTitle />
      <WordRibbon />
      <WordPage />
    </section>
  )
}

function Annotations() {
  return (
    <div className="pointer-events-none absolute inset-0">
      <svg viewBox="0 0 54 78" className="absolute top-[373px] left-[554px] h-[78px] w-[54px]" fill="none" stroke="#ee1c25" strokeWidth="4">
        <path d="M15 3h24v36h12L27 75 3 39h12z" />
      </svg>
      <div className="absolute top-[485px] left-[525px] flex size-[26px] items-center justify-center rounded-full bg-[#fff200]/90">
        <svg viewBox="0 0 6 10" className="h-[10px] w-1.5" fill="none" stroke="#333"><path d="M1 .500h1.500L3 1v8l-.5.500H1M5 .500H3.500M5 9.500H3.500" /></svg>
      </div>
      <div className="absolute top-[542px] left-[502px] h-1 w-[21px] rounded-full bg-[#777]" />
    </div>
  )
}

export default function App() {
  return (
    <div className="relative flex h-screen flex-col overflow-hidden bg-white font-['Open_Sans',sans-serif]">
      <AppHeader />
      <Ribbon />
      <div className="flex min-h-0 flex-1">
        <Explorer />
        <DocumentPane />
      </div>
      <StatusBar />
      <div className="absolute inset-y-0 left-0 w-px bg-[#333]" />
      <div className="absolute top-[307px] left-[635px] size-[21px] rounded-full bg-[#ff8080]" />
      <CommentWindow />
      <WordWindow />
      <Annotations />
    </div>
  )
}
